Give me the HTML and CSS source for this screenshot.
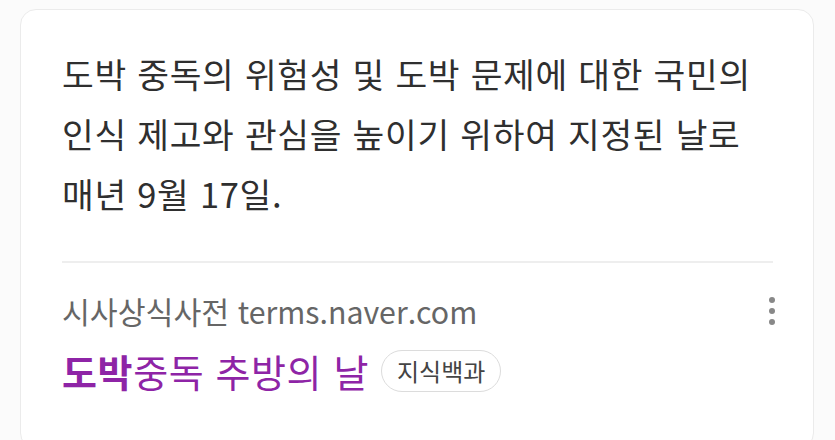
FILE: index.html
```html
<!DOCTYPE html>
<html lang="ko">
<head>
<meta charset="utf-8">
<link rel="stylesheet" href="styles.css">
</head>
<body>
<div class="card">
  <p class="desc">도박 중독의 위험성 및 도박 문제에 대한 국민의<br>인식 제고와 관심을 높이기 위하여 지정된 날로<br>매년 9월 17일.</p>
  <div class="divider"></div>
  <div class="source-row">
    <div class="source">시사상식사전 terms.naver.com</div>
    <div class="more"><span></span><span></span><span></span></div>
  </div>
  <div class="title-row">
    <span class="title"><b>도박</b>중독 추방의 날</span>
    <span class="chip">지식백과</span>
  </div>
</div>
</body>
</html>
```
FILE: styles.css
```css
html, body {
  margin: 0;
  padding: 0;
  background: #fbfbfb;
}
body {
  padding: 9px 21px 0 20px;
  font-family: "Noto Sans CJK KR", "Roboto", sans-serif;
}
.card {
  background: #fff;
  border: 1.5px solid #ebebeb;
  border-radius: 16px;
  height: 440px;
  box-sizing: border-box;
  padding: 33px 40px 0 41px;
}
.desc {
  margin: 0;
  font-size: 34.5px;
  line-height: 60px;
  color: #2f2f2f;
  letter-spacing: 0.7px;
  white-space: nowrap;
}
.divider {
  height: 1.5px;
  background: #eeeeee;
  margin-top: 38px;
}
.source-row {
  display: flex;
  justify-content: space-between;
  align-items: center;
  margin-top: 23px;
}
.source {
  font-size: 30.3px;
  color: #666;
  line-height: 50px;
}
.more {
  display: flex;
  flex-direction: column;
  gap: 5px;
  margin-right: -2px;
}
.more span {
  width: 6px;
  height: 6px;
  border-radius: 50%;
  background: #888;
}
.title-row {
  display: flex;
  align-items: center;
  gap: 12px;
  margin-top: 10px;
}
.title {
  font-size: 38px;
  color: #8e24a6;
  line-height: 50px;
  letter-spacing: 0.6px;
}
.title b {
  font-weight: 700;
}
.chip {
  font-size: 24px;
  color: #444;
  border: 1.5px solid #dcdcdc;
  border-radius: 22px;
  padding: 0 15px;
  line-height: 40px;
}
```
